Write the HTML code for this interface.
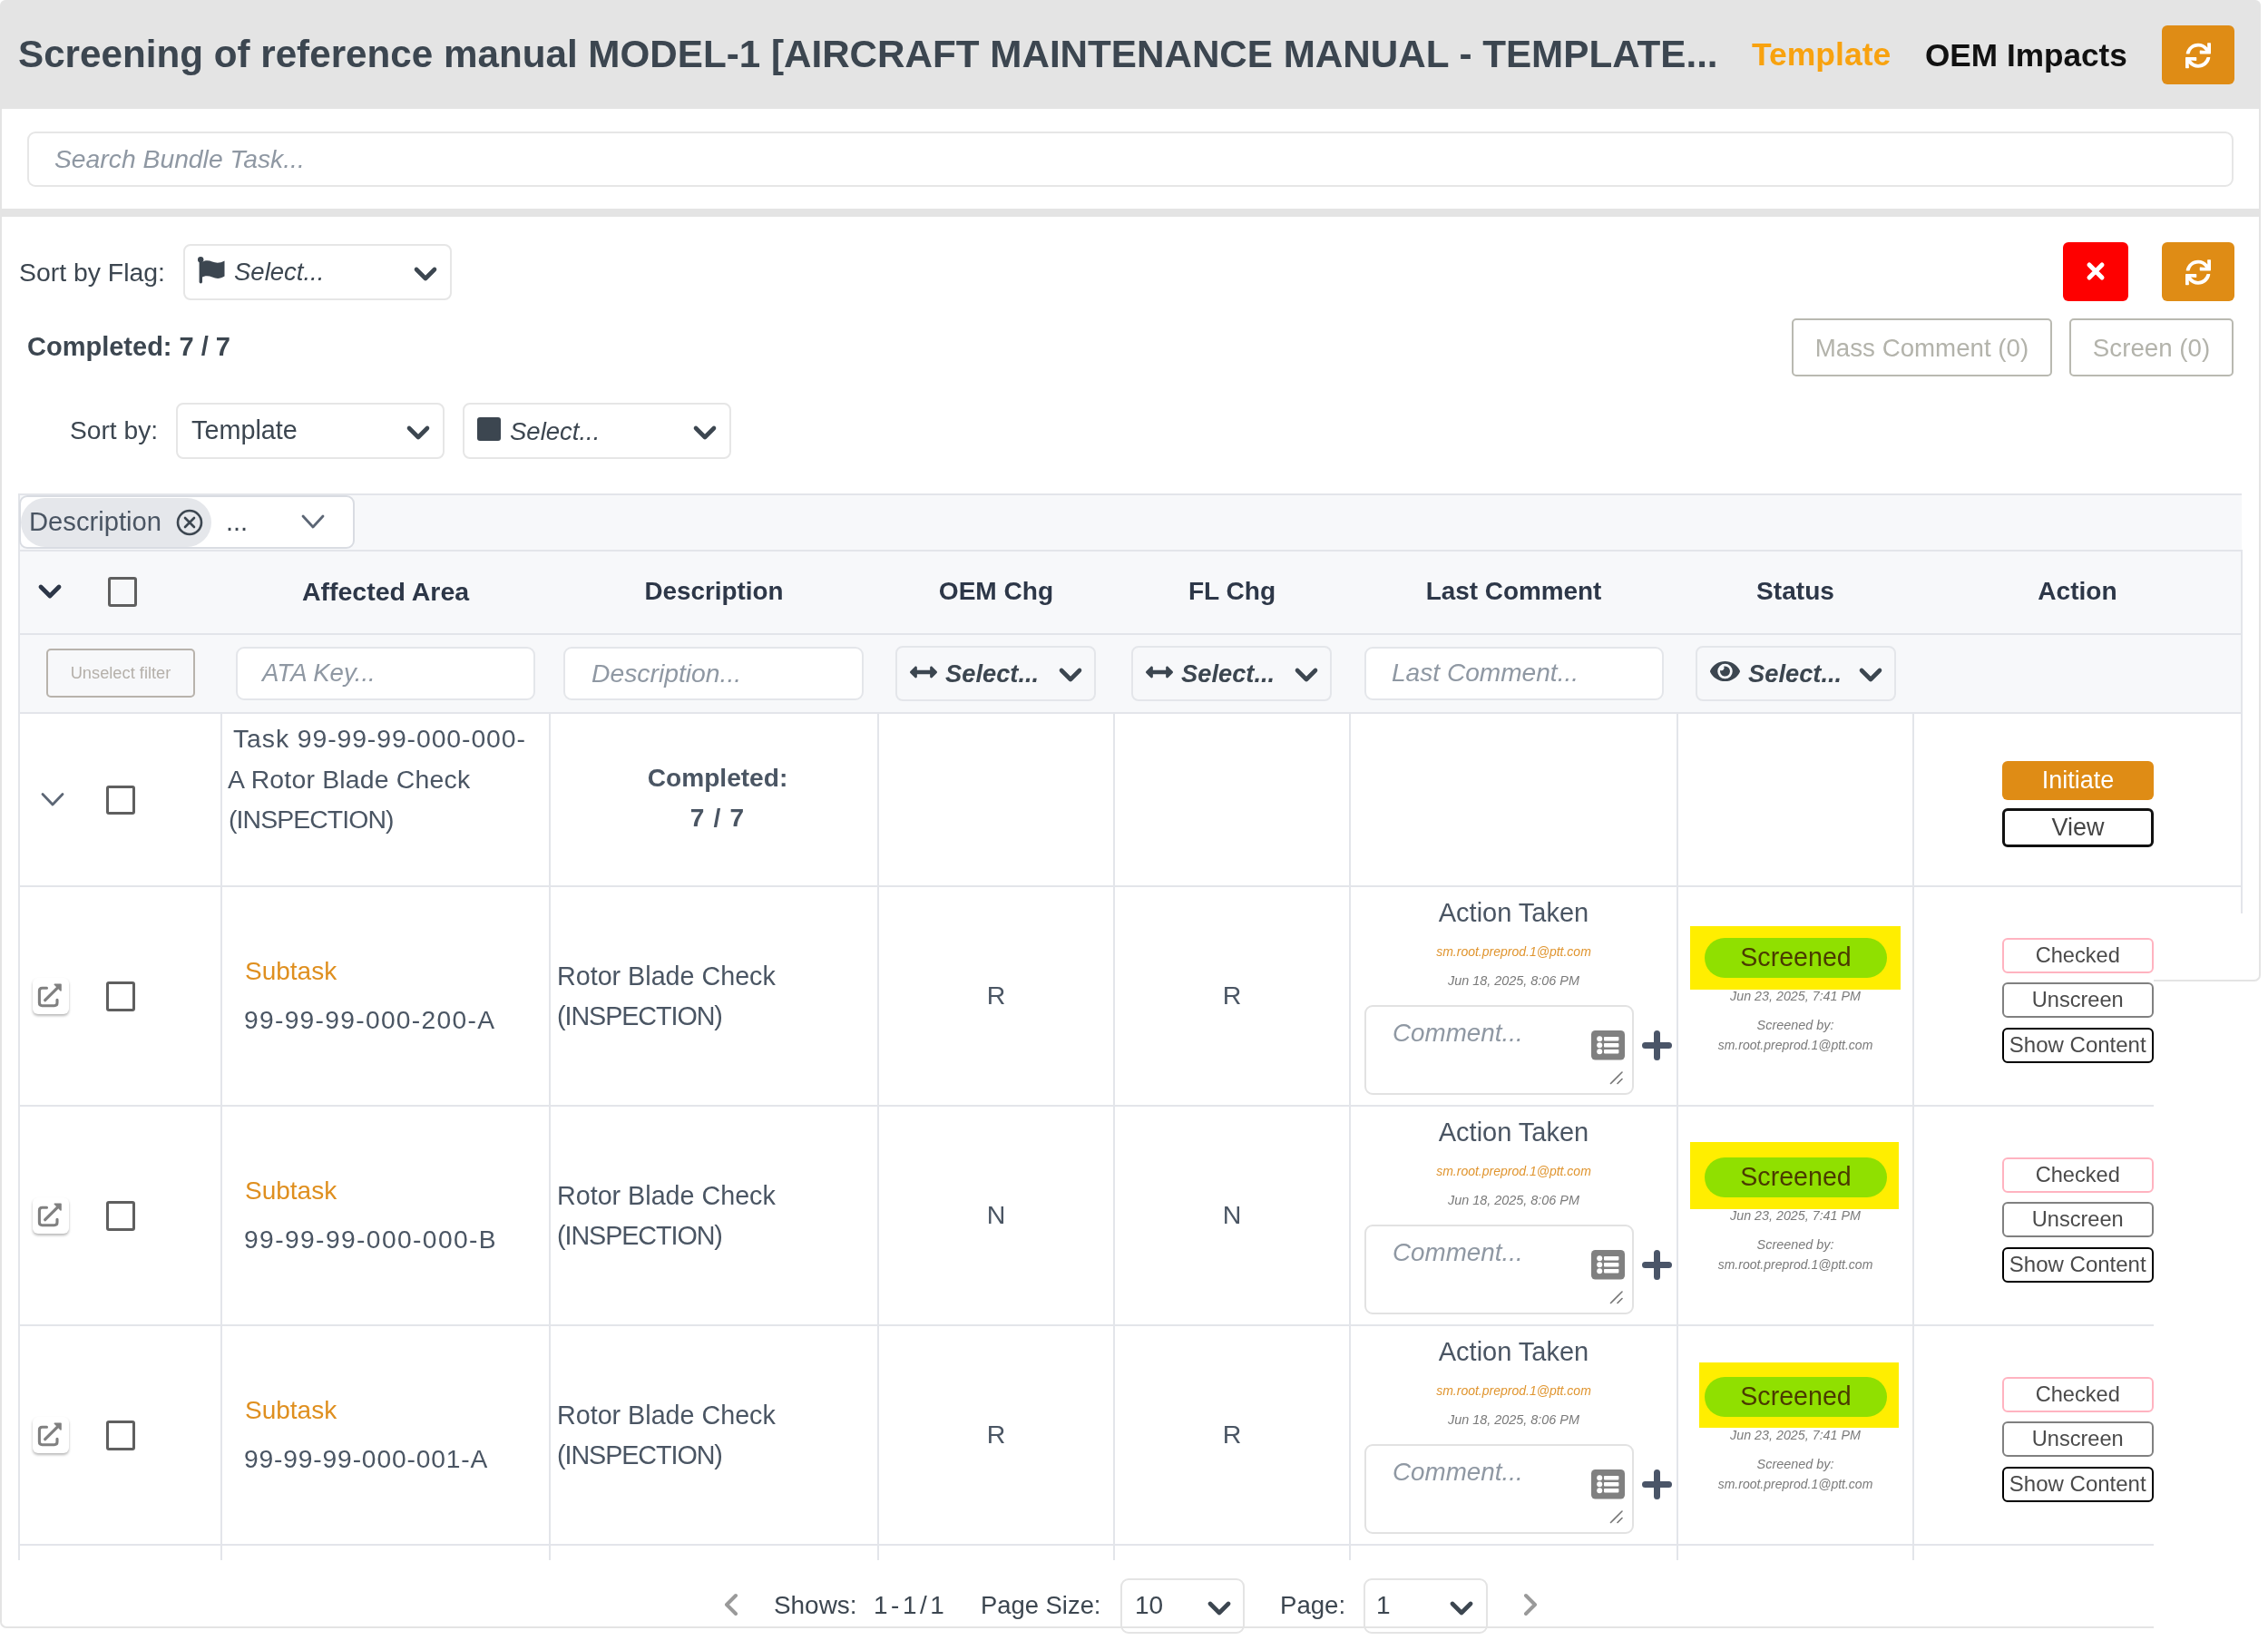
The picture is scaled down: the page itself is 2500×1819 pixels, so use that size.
<!DOCTYPE html>
<html>
<head>
<meta charset="utf-8">
<style>
html,body{margin:0;padding:0;}
body{width:2500px;height:1819px;position:relative;overflow:hidden;background:#fff;font-family:"Liberation Sans",sans-serif;}
.a{position:absolute;}
.t{position:absolute;white-space:nowrap;line-height:1;font-family:"Liberation Sans",sans-serif;will-change:transform;}
.c{text-align:center;}
.b{font-weight:bold;}
.i{font-style:italic;}
.box{position:absolute;box-sizing:border-box;}
.hl{position:absolute;height:2px;background:#e3e5ea;}
.vl{position:absolute;width:2px;background:#e3e5ea;}
svg{position:absolute;overflow:visible;}
</style>
</head>
<body>
<!-- outer gray frame -->
<div class="a" style="left:0;top:0;width:2492px;height:120px;background:#e4e4e4;border-radius:6px 6px 0 0;"></div>
<div class="a" style="left:0;top:118px;width:2px;height:1670px;background:#e4e4e4;"></div>
<div class="a" style="left:0;top:1780px;width:14px;height:15px;border-left:2px solid #e4e4e4;border-bottom:2px solid #e4e4e4;border-radius:0 0 0 7px;box-sizing:border-box;"></div>
<div class="a" style="left:12px;top:1793px;width:2362px;height:2px;background:#e4e4e4;"></div>
<div class="a" style="left:2490px;top:118px;width:2px;height:950px;background:#e4e4e4;"></div>
<div class="a" style="left:2478px;top:1066px;width:14px;height:16px;border-right:2px solid #e4e4e4;border-bottom:2px solid #e4e4e4;border-radius:0 0 7px 0;box-sizing:border-box;"></div>
<div class="a" style="left:2374px;top:1080px;width:106px;height:2px;background:#e4e4e4;"></div>
<div class="a" style="left:0;top:230px;width:2492px;height:9px;background:#e4e4e4;"></div>

<!-- HEADER -->
<div class="t b" style="left:19.5px;top:39px;font-size:42.2px;color:#3c4650;">Screening of reference manual MODEL-1 [AIRCRAFT MAINTENANCE MANUAL - TEMPLATE...</div>
<div class="t b" style="left:1931px;top:43px;font-size:35.5px;color:#f8a20f;">Template</div>
<div class="t b" style="left:2122px;top:43px;font-size:35.2px;color:#111;">OEM Impacts</div>
<div class="box" style="left:2383px;top:28px;width:80px;height:65px;background:#df8c15;border-radius:6px;"></div>
<svg style="left:2409px;top:46.5px;" width="28" height="28.5" viewBox="0 0 512 512"><path d="M440.65 12.57l4 82.77A247.16 247.16 0 0 0 255.83 8C134.73 8 33.91 94.92 12.29 209.82A12 12 0 0 0 24.09 224h49.05a12 12 0 0 0 11.67-9.26 175.91 175.91 0 0 1 317-56.94l-101.46-4.86a12 12 0 0 0-12.57 12v47.41a12 12 0 0 0 12 12H500a12 12 0 0 0 12-12V12a12 12 0 0 0-12-12h-47.37a12 12 0 0 0-11.98 12.57zM255.83 432a175.61 175.61 0 0 1-146-77.8l101.8 4.870a12 12 0 0 0 12.57-12v-47.4a12 12 0 0 0-12-12H12a12 12 0 0 0-12 12V500a12 12 0 0 0 12 12h47.35a12 12 0 0 0 12-12.6l-4.150-82.57A247.17 247.17 0 0 0 255.83 504c121.11 0 221.93-86.92 243.55-201.82a12 12 0 0 0-11.8-14.18h-49.05a12 12 0 0 0-11.67 9.26A175.86 175.86 0 0 1 255.83 432z" fill="#fff"/></svg>

<!-- SEARCH -->
<div class="box" style="left:30px;top:145px;width:2432px;height:61px;border:2px solid #e6e6e6;border-radius:9px;"></div>
<div class="t i" style="left:60px;top:161px;font-size:28.3px;color:#8f98a3;">Search Bundle Task...</div>

<!-- SECTION 2 -->
<div class="t" style="left:21px;top:286px;font-size:28.4px;color:#3c4650;">Sort by Flag:</div>
<div class="box" style="left:202px;top:269px;width:296px;height:62px;border:2px solid #e6e6e6;border-radius:8px;"></div>
<svg style="left:218px;top:283px;" width="30" height="30" viewBox="0 0 30 30"><circle cx="3.2" cy="3.2" r="3.2" fill="#3c4650"/><rect x="1.6" y="3" width="3.4" height="26.5" rx="1.7" fill="#3c4650"/><path d="M4 6.5 C8 3.5 12 4 16 5.5 C20 7 24 7.5 29.5 4.5 L29.5 21.5 C25 24.5 20.5 24.5 16 22.5 C12 21 8 20.5 4 23 Z" fill="#3c4650"/></svg>
<div class="t i" style="left:258px;top:286px;font-size:27.5px;color:#3c4650;">Select...</div>
<svg style="left:456px;top:294px;" width="26" height="16" viewBox="0 0 26 16"><path d="M3 3 L13 13 L23 3" fill="none" stroke="#3c4650" stroke-width="4.6" stroke-linecap="round" stroke-linejoin="round"/></svg>

<div class="t b" style="left:30px;top:368px;font-size:29px;color:#3c4650;">Completed: 7 / 7</div>

<div class="t" style="left:77px;top:460px;font-size:28.2px;color:#3c4650;">Sort by:</div>
<div class="box" style="left:194px;top:444px;width:296px;height:62px;border:2px solid #e6e6e6;border-radius:8px;"></div>
<div class="t" style="left:211px;top:460px;font-size:28.8px;color:#3c4650;">Template</div>
<svg style="left:448px;top:469px;" width="26" height="16" viewBox="0 0 26 16"><path d="M3 3 L13 13 L23 3" fill="none" stroke="#3c4650" stroke-width="4.6" stroke-linecap="round" stroke-linejoin="round"/></svg>
<div class="box" style="left:510px;top:444px;width:296px;height:62px;border:2px solid #e6e6e6;border-radius:8px;"></div>
<div class="a" style="left:526px;top:460px;width:26px;height:26px;background:#3c4650;border-radius:3px;"></div>
<div class="t i" style="left:562px;top:461.5px;font-size:27.5px;color:#3c4650;">Select...</div>
<svg style="left:764px;top:469px;" width="26" height="16" viewBox="0 0 26 16"><path d="M3 3 L13 13 L23 3" fill="none" stroke="#3c4650" stroke-width="4.6" stroke-linecap="round" stroke-linejoin="round"/></svg>

<div class="box" style="left:2274px;top:267px;width:72px;height:65px;background:#fe0000;border-radius:6px;"></div>
<svg style="left:2300px;top:289px;" width="20" height="20" viewBox="0 0 20 20"><path d="M3 3 L17 17 M17 3 L3 17" stroke="#fff" stroke-width="5" stroke-linecap="round"/></svg>
<div class="box" style="left:2383px;top:267px;width:80px;height:65px;background:#df8c15;border-radius:6px;"></div>
<svg style="left:2409px;top:286px;" width="28" height="28.5" viewBox="0 0 512 512"><path d="M440.65 12.57l4 82.77A247.16 247.16 0 0 0 255.83 8C134.73 8 33.91 94.92 12.29 209.82A12 12 0 0 0 24.09 224h49.05a12 12 0 0 0 11.67-9.26 175.91 175.91 0 0 1 317-56.94l-101.46-4.86a12 12 0 0 0-12.57 12v47.41a12 12 0 0 0 12 12H500a12 12 0 0 0 12-12V12a12 12 0 0 0-12-12h-47.37a12 12 0 0 0-11.98 12.57zM255.83 432a175.61 175.61 0 0 1-146-77.8l101.8 4.870a12 12 0 0 0 12.57-12v-47.4a12 12 0 0 0-12-12H12a12 12 0 0 0-12 12V500a12 12 0 0 0 12 12h47.35a12 12 0 0 0 12-12.6l-4.150-82.57A247.17 247.17 0 0 0 255.83 504c121.11 0 221.93-86.92 243.55-201.82a12 12 0 0 0-11.8-14.18h-49.05a12 12 0 0 0-11.67 9.26A175.86 175.86 0 0 1 255.83 432z" fill="#fff"/></svg>

<div class="box" style="left:1975px;top:351px;width:287px;height:64px;border:2px solid #b9b9b1;border-radius:5px;"></div>
<div class="t c" style="left:1975px;width:287px;top:369.5px;font-size:27.7px;color:#b3b3ab;">Mass Comment (0)</div>
<div class="box" style="left:2281px;top:351px;width:181px;height:64px;border:2px solid #b9b9b1;border-radius:5px;"></div>
<div class="t c" style="left:2281px;width:181px;top:369.5px;font-size:27.7px;color:#b3b3ab;">Screen (0)</div>

<!-- TABLE HEAD AREA -->
<div class="a" style="left:21px;top:544px;width:2450px;height:242px;background:#f7f8fa;"></div>
<div class="hl" style="left:21px;top:543.5px;width:2450px;"></div>
<div class="hl" style="left:21px;top:605.5px;width:2450px;"></div>
<div class="hl" style="left:21px;top:697.5px;width:2450px;"></div>
<div class="hl" style="left:21px;top:784.5px;width:2450px;"></div>
<div class="vl" style="left:20px;top:544px;height:1176px;"></div>
<div class="vl" style="left:2470px;top:606px;height:401px;"></div>

<!-- chip multiselect -->
<div class="box" style="left:21px;top:546px;width:370px;height:59px;background:#fff;border:2px solid #d9dce2;border-radius:9px;"></div>
<div class="a" style="left:23px;top:548.5px;width:210px;height:54.5px;background:#e5e7eb;border-radius:28px;"></div>
<div class="t" style="left:32px;top:560.5px;font-size:29.2px;color:#4a5563;">Description</div>
<svg style="left:194px;top:560.5px;" width="30" height="30" viewBox="0 0 30 30"><circle cx="15" cy="15" r="13" fill="none" stroke="#3c4650" stroke-width="2.6"/><path d="M10 10 L20 20 M20 10 L10 20" stroke="#3c4650" stroke-width="2.6" stroke-linecap="round"/></svg>
<div class="t" style="left:249px;top:560.5px;font-size:29px;color:#3c4650;">...</div>
<svg style="left:332px;top:567px;" width="26" height="16" viewBox="0 0 26 16"><path d="M2 2 L13 14 L24 2" fill="none" stroke="#5c6675" stroke-width="2.8" stroke-linecap="round" stroke-linejoin="round"/></svg>

<!-- header row -->
<svg style="left:42px;top:644px;" width="26" height="16" viewBox="0 0 26 16"><path d="M3 3 L13 13 L23 3" fill="none" stroke="#2d3748" stroke-width="4.8" stroke-linecap="round" stroke-linejoin="round"/></svg>
<div class="box" style="left:118.5px;top:636px;width:32.5px;height:32.5px;border:3px solid #5f5f5f;border-radius:3px;"></div>
<div class="t b c" style="left:244px;width:362px;top:637.5px;font-size:28.5px;color:#2d3748;">Affected Area</div>
<div class="t b c" style="left:606px;width:362px;top:637.5px;font-size:27.8px;color:#2d3748;">Description</div>
<div class="t b c" style="left:968px;width:260px;top:637.5px;font-size:28.1px;color:#2d3748;">OEM Chg</div>
<div class="t b c" style="left:1228px;width:260px;top:637.5px;font-size:28.1px;color:#2d3748;">FL Chg</div>
<div class="t b c" style="left:1488px;width:361px;top:637.5px;font-size:27.9px;color:#2d3748;">Last Comment</div>
<div class="t b c" style="left:1849px;width:260px;top:637.5px;font-size:28.1px;color:#2d3748;">Status</div>
<div class="t b c" style="left:2109px;width:362px;top:637.5px;font-size:28.1px;color:#2d3748;">Action</div>

<!-- filter row -->
<div class="box" style="left:50.5px;top:715px;width:164px;height:54px;border:2px solid #b8b3ac;border-radius:5px;"></div>
<div class="t c" style="left:50.5px;width:164px;top:732.8px;font-size:18.3px;color:#b5b0aa;">Unselect filter</div>
<div class="box" style="left:260px;top:712.5px;width:330px;height:59.5px;background:#fff;border:2px solid #e4e6ea;border-radius:9px;"></div>
<div class="t i" style="left:289px;top:728.3px;font-size:27.6px;color:#8f98a3;">ATA Key...</div>
<div class="box" style="left:621px;top:712.5px;width:331px;height:59.5px;background:#fff;border:2px solid #e4e6ea;border-radius:9px;"></div>
<div class="t i" style="left:651.7px;top:728.3px;font-size:28.3px;color:#8f98a3;">Description...</div>
<div class="box" style="left:987px;top:711.5px;width:221px;height:61.5px;border:2px solid #e4e6ea;border-radius:8px;"></div>
<svg style="left:1003px;top:731px;" width="30" height="20" viewBox="0 0 512 320"><path d="M377.941 9.941V56H134.059V9.941c0-21.382-25.851-32.09-40.971-16.971L7.029 79.029c-9.373 9.373-9.373 24.568 0 33.941l86.059 86.059c15.119 15.119 40.971 4.411 40.971-16.971V136h243.882v46.059c0 21.382 25.851 32.09 40.971 16.971l86.059-86.059c9.373-9.373 9.373-24.568 0-33.941L418.912-7.029C403.793-22.149 377.941-11.441 377.941 9.941z" transform="translate(0,64)" fill="#3c4650"/></svg>
<div class="t b i" style="left:1042px;top:728.5px;font-size:27.3px;color:#3c4650;">Select...</div>
<svg style="left:1166.5px;top:735.5px;" width="26" height="16" viewBox="0 0 26 16"><path d="M3 3 L13 13 L23 3" fill="none" stroke="#3c4650" stroke-width="4.6" stroke-linecap="round" stroke-linejoin="round"/></svg>
<div class="box" style="left:1247px;top:711.5px;width:221px;height:61.5px;border:2px solid #e4e6ea;border-radius:8px;"></div>
<svg style="left:1263px;top:731px;" width="30" height="20" viewBox="0 0 512 320"><path d="M377.941 9.941V56H134.059V9.941c0-21.382-25.851-32.09-40.971-16.971L7.029 79.029c-9.373 9.373-9.373 24.568 0 33.941l86.059 86.059c15.119 15.119 40.971 4.411 40.971-16.971V136h243.882v46.059c0 21.382 25.851 32.09 40.971 16.971l86.059-86.059c9.373-9.373 9.373-24.568 0-33.941L418.912-7.029C403.793-22.149 377.941-11.441 377.941 9.941z" transform="translate(0,64)" fill="#3c4650"/></svg>
<div class="t b i" style="left:1302px;top:728.5px;font-size:27.3px;color:#3c4650;">Select...</div>
<svg style="left:1426.5px;top:735.5px;" width="26" height="16" viewBox="0 0 26 16"><path d="M3 3 L13 13 L23 3" fill="none" stroke="#3c4650" stroke-width="4.6" stroke-linecap="round" stroke-linejoin="round"/></svg>
<div class="box" style="left:1503.5px;top:713px;width:330px;height:59px;background:#fff;border:2px solid #e4e6ea;border-radius:9px;"></div>
<div class="t i" style="left:1533.6px;top:728.3px;font-size:28.1px;color:#8f98a3;">Last Comment...</div>
<div class="box" style="left:1868.5px;top:711.5px;width:221.5px;height:61.5px;border:2px solid #e4e6ea;border-radius:8px;"></div>
<svg style="left:1885px;top:729px;" width="33" height="24" viewBox="0 0 576 416"><path d="M572.52 177.4C518.29 71.59 410.93 0 288 0S57.68 71.64 3.48 177.41a32.35 32.35 0 0 0 0 29.19C57.71 312.41 165.07 384 288 384s230.32-71.64 284.52-177.41a32.35 32.35 0 0 0 0-29.19zM288 336a144 144 0 1 1 144-144 143.93 143.93 0 0 1-144 144zm0-240a95.31 95.31 0 0 0-25.310 3.790 47.85 47.85 0 0 1-66.900 66.900A95.780 95.780 0 1 0 288 96z" fill="#3c4650"/></svg>
<div class="t b i" style="left:1927px;top:728.5px;font-size:27.3px;color:#3c4650;">Select...</div>
<svg style="left:2048.5px;top:735.5px;" width="26" height="16" viewBox="0 0 26 16"><path d="M3 3 L13 13 L23 3" fill="none" stroke="#3c4650" stroke-width="4.6" stroke-linecap="round" stroke-linejoin="round"/></svg>

<!-- body grid lines -->
<div class="hl" style="left:21px;top:976px;width:2450px;"></div>
<div class="hl" style="left:21px;top:1218px;width:2353px;"></div>
<div class="hl" style="left:21px;top:1460px;width:2353px;"></div>
<div class="hl" style="left:21px;top:1702px;width:2353px;"></div>
<div class="vl" style="left:243px;top:786px;height:934px;"></div>
<div class="vl" style="left:605px;top:786px;height:934px;"></div>
<div class="vl" style="left:967px;top:786px;height:934px;"></div>
<div class="vl" style="left:1227px;top:786px;height:934px;"></div>
<div class="vl" style="left:1487px;top:786px;height:934px;"></div>
<div class="vl" style="left:1848px;top:786px;height:934px;"></div>
<div class="vl" style="left:2108px;top:786px;height:934px;"></div>

<!-- task row -->
<svg style="left:45px;top:873px;" width="26" height="17" viewBox="0 0 26 17"><path d="M2 2.5 L13 14 L24 2.5" fill="none" stroke="#5c6675" stroke-width="2.8" stroke-linecap="round" stroke-linejoin="round"/></svg>
<div class="box" style="left:116.5px;top:865.5px;width:32.5px;height:32.5px;border:3px solid #5f5f5f;border-radius:3px;"></div>
<div class="t" style="left:257px;top:799.5px;font-size:28.4px;letter-spacing:0.9px;color:#4a5563;">Task 99-99-99-000-000-</div>
<div class="t" style="left:251px;top:844.5px;font-size:28.4px;letter-spacing:0.2px;color:#4a5563;">A Rotor Blade Check</div>
<div class="t" style="left:251.5px;top:889px;font-size:28.4px;letter-spacing:-0.9px;color:#4a5563;">(INSPECTION)</div>
<div class="t b c" style="left:610px;width:362px;top:844px;font-size:28.1px;color:#4a5563;">Completed:</div>
<div class="t b c" style="left:610px;width:362px;top:888px;font-size:28.1px;letter-spacing:1.2px;color:#4a5563;">7 / 7</div>
<div class="box" style="left:2207px;top:839px;width:167px;height:43px;background:#df8c15;border-radius:6px;"></div>
<div class="t c" style="left:2207px;width:167px;top:846.8px;font-size:27px;color:#fff;">Initiate</div>
<div class="box" style="left:2207px;top:891px;width:167px;height:42.5px;border:3px solid #111;border-radius:6px;"></div>
<div class="t c" style="left:2207px;width:167px;top:898.8px;font-size:27px;color:#444;">View</div>

<!--ROWS-->
<!-- subtask row 977 -->
<div class="box" style="left:35.5px;top:1078px;width:40.5px;height:40px;background:#fff;border-radius:6px;box-shadow:0 2px 3px rgba(0,0,0,0.28);"></div>
<svg style="left:42px;top:1084px;" width="27" height="27" viewBox="0 0 27 27"><path d="M9.5 5.3 H4.5 Q1.4 5.3 1.4 8.4 V21.6 Q1.4 24.7 4.5 24.7 H17.9 Q21 24.7 21 21.6 V18.2" fill="none" stroke="#808080" stroke-width="3.1" stroke-linecap="round"/><path d="M7.7 18.7 L20.8 5.6" stroke="#808080" stroke-width="3.3" stroke-linecap="round"/><path d="M18.3 1.3 H25 V8 Z" fill="#808080" stroke="#808080" stroke-width="1.6" stroke-linejoin="round"/></svg>
<div class="box" style="left:116.5px;top:1082px;width:32.5px;height:33px;border:3px solid #5f5f5f;border-radius:3px;"></div>
<div class="t" style="left:269.6px;top:1057.29px;font-size:28px;color:#df8f1f;">Subtask</div>
<div class="t" style="left:269.4px;top:1110.12px;font-size:28.2px;letter-spacing:1.3px;color:#4a5563;">99-99-99-000-200-A</div>
<div class="t" style="left:614px;top:1061.7px;font-size:28.7px;color:#4a5563;">Rotor Blade Check</div>
<div class="t" style="left:614px;top:1106.3px;font-size:28.7px;letter-spacing:-1.05px;color:#4a5563;">(INSPECTION)</div>
<div class="t c" style="left:968px;width:260px;top:1083.47px;font-size:28.5px;color:#4a5563;">R</div>
<div class="t c" style="left:1228px;width:260px;top:1083.47px;font-size:28.5px;color:#4a5563;">R</div>
<div class="t c" style="left:1488px;width:361px;top:992.15px;font-size:29px;color:#4a5563;">Action Taken</div>
<div class="t c i" style="left:1488px;width:361px;top:1042.35px;font-size:14px;color:#e0952f;">sm.root.preprod.1@ptt.com</div>
<div class="t c i" style="left:1488px;width:361px;top:1073.81px;font-size:14.4px;color:#7a7a7a;">Jun 18, 2025, 8:06 PM</div>
<div class="box" style="left:1504px;top:1107.7px;width:297px;height:99px;background:#fff;border:2px solid #e2e2e2;border-radius:9px;"></div>
<div class="t i" style="left:1535px;top:1125.26px;font-size:27.8px;color:#8f98a3;">Comment...</div>
<svg style="left:1754px;top:1136.4px;" width="37" height="33" viewBox="0 0 37 33"><rect x="0" y="0" width="37" height="32.5" rx="4.5" fill="#808080"/><circle cx="9.2" cy="9.2" r="3" fill="#fff"/><circle cx="9.2" cy="16.3" r="3" fill="#fff"/><circle cx="9.2" cy="23.2" r="3" fill="#fff"/><rect x="14" y="7" width="16.4" height="4.4" rx="0.8" fill="#fff"/><rect x="14" y="14.1" width="16.4" height="4.4" rx="0.8" fill="#fff"/><rect x="14" y="21" width="16.4" height="4.4" rx="0.8" fill="#fff"/></svg>
<svg style="left:1774px;top:1180px;" width="16" height="16" viewBox="0 0 16 16"><path d="M1.5 14.5 L14 2 M9 14.5 L14 9.5" stroke="#777" stroke-width="1.6" stroke-linecap="round"/></svg>
<svg style="left:1809.5px;top:1135.7px;" width="33" height="33" viewBox="0 0 33 33"><path d="M16.5 3.5 V29.5 M3.5 16.5 H29.5" stroke="#4a5568" stroke-width="7" stroke-linecap="round"/></svg>
<div class="a" style="left:1863.3px;top:1020.8px;width:232.2px;height:70.6px;background:#ffee00;"></div>
<div class="a" style="left:1879px;top:1034px;width:201px;height:44.3px;background:#90e000;border-radius:23px;"></div>
<div class="t c" style="left:1879px;width:201px;top:1040.98px;font-size:28.6px;color:#4a3b00;">Screened</div>
<div class="t c i" style="left:1849px;width:260px;top:1091.49px;font-size:14.3px;color:#7a7a7a;">Jun 23, 2025, 7:41 PM</div>
<div class="t c i" style="left:1849px;width:260px;top:1122.61px;font-size:14.4px;color:#7a7a7a;">Screened by:</div>
<div class="t c i" style="left:1849px;width:260px;top:1144.65px;font-size:14px;color:#7a7a7a;">sm.root.preprod.1@ptt.com</div>
<div class="box" style="left:2207px;top:1034.2px;width:166.5px;height:39px;border:2px solid #ffb3c0;border-radius:6px;"></div>
<div class="t c" style="left:2207px;width:166.5px;top:1041.92px;font-size:23.6px;color:#4a4a4a;">Checked</div>
<div class="box" style="left:2207px;top:1083.4px;width:166.5px;height:39px;border:2.5px solid #808080;border-radius:6px;"></div>
<div class="t c" style="left:2207px;width:166.5px;top:1091.12px;font-size:23.6px;color:#4a4a4a;">Unscreen</div>
<div class="box" style="left:2207px;top:1132.8px;width:166.5px;height:38.8px;border:2.6px solid #000;border-radius:6px;"></div>
<div class="t c" style="left:2207px;width:166.5px;top:1139.98px;font-size:24px;color:#4a4a4a;">Show Content</div>
<!-- subtask row 1219 -->
<div class="box" style="left:35.5px;top:1320px;width:40.5px;height:40px;background:#fff;border-radius:6px;box-shadow:0 2px 3px rgba(0,0,0,0.28);"></div>
<svg style="left:42px;top:1326px;" width="27" height="27" viewBox="0 0 27 27"><path d="M9.5 5.3 H4.5 Q1.4 5.3 1.4 8.4 V21.6 Q1.4 24.7 4.5 24.7 H17.9 Q21 24.7 21 21.6 V18.2" fill="none" stroke="#808080" stroke-width="3.1" stroke-linecap="round"/><path d="M7.7 18.7 L20.8 5.6" stroke="#808080" stroke-width="3.3" stroke-linecap="round"/><path d="M18.3 1.3 H25 V8 Z" fill="#808080" stroke="#808080" stroke-width="1.6" stroke-linejoin="round"/></svg>
<div class="box" style="left:116.5px;top:1324px;width:32.5px;height:33px;border:3px solid #5f5f5f;border-radius:3px;"></div>
<div class="t" style="left:269.6px;top:1299.29px;font-size:28px;color:#df8f1f;">Subtask</div>
<div class="t" style="left:269.4px;top:1352.12px;font-size:28.2px;letter-spacing:1.4px;color:#4a5563;">99-99-99-000-000-B</div>
<div class="t" style="left:614px;top:1303.7px;font-size:28.7px;color:#4a5563;">Rotor Blade Check</div>
<div class="t" style="left:614px;top:1348.3px;font-size:28.7px;letter-spacing:-1.05px;color:#4a5563;">(INSPECTION)</div>
<div class="t c" style="left:968px;width:260px;top:1325.47px;font-size:28.5px;color:#4a5563;">N</div>
<div class="t c" style="left:1228px;width:260px;top:1325.47px;font-size:28.5px;color:#4a5563;">N</div>
<div class="t c" style="left:1488px;width:361px;top:1234.15px;font-size:29px;color:#4a5563;">Action Taken</div>
<div class="t c i" style="left:1488px;width:361px;top:1284.35px;font-size:14px;color:#e0952f;">sm.root.preprod.1@ptt.com</div>
<div class="t c i" style="left:1488px;width:361px;top:1315.81px;font-size:14.4px;color:#7a7a7a;">Jun 18, 2025, 8:06 PM</div>
<div class="box" style="left:1504px;top:1349.7px;width:297px;height:99px;background:#fff;border:2px solid #e2e2e2;border-radius:9px;"></div>
<div class="t i" style="left:1535px;top:1367.26px;font-size:27.8px;color:#8f98a3;">Comment...</div>
<svg style="left:1754px;top:1378.4px;" width="37" height="33" viewBox="0 0 37 33"><rect x="0" y="0" width="37" height="32.5" rx="4.5" fill="#808080"/><circle cx="9.2" cy="9.2" r="3" fill="#fff"/><circle cx="9.2" cy="16.3" r="3" fill="#fff"/><circle cx="9.2" cy="23.2" r="3" fill="#fff"/><rect x="14" y="7" width="16.4" height="4.4" rx="0.8" fill="#fff"/><rect x="14" y="14.1" width="16.4" height="4.4" rx="0.8" fill="#fff"/><rect x="14" y="21" width="16.4" height="4.4" rx="0.8" fill="#fff"/></svg>
<svg style="left:1774px;top:1422px;" width="16" height="16" viewBox="0 0 16 16"><path d="M1.5 14.5 L14 2 M9 14.5 L14 9.5" stroke="#777" stroke-width="1.6" stroke-linecap="round"/></svg>
<svg style="left:1809.5px;top:1377.7px;" width="33" height="33" viewBox="0 0 33 33"><path d="M16.5 3.5 V29.5 M3.5 16.5 H29.5" stroke="#4a5568" stroke-width="7" stroke-linecap="round"/></svg>
<div class="a" style="left:1863.3px;top:1258.5px;width:230.2px;height:74.1px;background:#ffee00;"></div>
<div class="a" style="left:1879px;top:1276px;width:201px;height:44.3px;background:#90e000;border-radius:23px;"></div>
<div class="t c" style="left:1879px;width:201px;top:1282.98px;font-size:28.6px;color:#4a3b00;">Screened</div>
<div class="t c i" style="left:1849px;width:260px;top:1333.49px;font-size:14.3px;color:#7a7a7a;">Jun 23, 2025, 7:41 PM</div>
<div class="t c i" style="left:1849px;width:260px;top:1364.61px;font-size:14.4px;color:#7a7a7a;">Screened by:</div>
<div class="t c i" style="left:1849px;width:260px;top:1386.65px;font-size:14px;color:#7a7a7a;">sm.root.preprod.1@ptt.com</div>
<div class="box" style="left:2207px;top:1276.2px;width:166.5px;height:39px;border:2px solid #ffb3c0;border-radius:6px;"></div>
<div class="t c" style="left:2207px;width:166.5px;top:1283.92px;font-size:23.6px;color:#4a4a4a;">Checked</div>
<div class="box" style="left:2207px;top:1325.4px;width:166.5px;height:39px;border:2.5px solid #808080;border-radius:6px;"></div>
<div class="t c" style="left:2207px;width:166.5px;top:1333.12px;font-size:23.6px;color:#4a4a4a;">Unscreen</div>
<div class="box" style="left:2207px;top:1374.8px;width:166.5px;height:38.8px;border:2.6px solid #000;border-radius:6px;"></div>
<div class="t c" style="left:2207px;width:166.5px;top:1381.98px;font-size:24px;color:#4a4a4a;">Show Content</div>
<!-- subtask row 1461 -->
<div class="box" style="left:35.5px;top:1562px;width:40.5px;height:40px;background:#fff;border-radius:6px;box-shadow:0 2px 3px rgba(0,0,0,0.28);"></div>
<svg style="left:42px;top:1568px;" width="27" height="27" viewBox="0 0 27 27"><path d="M9.5 5.3 H4.5 Q1.4 5.3 1.4 8.4 V21.6 Q1.4 24.7 4.5 24.7 H17.9 Q21 24.7 21 21.6 V18.2" fill="none" stroke="#808080" stroke-width="3.1" stroke-linecap="round"/><path d="M7.7 18.7 L20.8 5.6" stroke="#808080" stroke-width="3.3" stroke-linecap="round"/><path d="M18.3 1.3 H25 V8 Z" fill="#808080" stroke="#808080" stroke-width="1.6" stroke-linejoin="round"/></svg>
<div class="box" style="left:116.5px;top:1566px;width:32.5px;height:33px;border:3px solid #5f5f5f;border-radius:3px;"></div>
<div class="t" style="left:269.6px;top:1541.29px;font-size:28px;color:#df8f1f;">Subtask</div>
<div class="t" style="left:269.4px;top:1594.12px;font-size:28.2px;letter-spacing:0.85px;color:#4a5563;">99-99-99-000-001-A</div>
<div class="t" style="left:614px;top:1545.7px;font-size:28.7px;color:#4a5563;">Rotor Blade Check</div>
<div class="t" style="left:614px;top:1590.3px;font-size:28.7px;letter-spacing:-1.05px;color:#4a5563;">(INSPECTION)</div>
<div class="t c" style="left:968px;width:260px;top:1567.47px;font-size:28.5px;color:#4a5563;">R</div>
<div class="t c" style="left:1228px;width:260px;top:1567.47px;font-size:28.5px;color:#4a5563;">R</div>
<div class="t c" style="left:1488px;width:361px;top:1476.15px;font-size:29px;color:#4a5563;">Action Taken</div>
<div class="t c i" style="left:1488px;width:361px;top:1526.35px;font-size:14px;color:#e0952f;">sm.root.preprod.1@ptt.com</div>
<div class="t c i" style="left:1488px;width:361px;top:1557.81px;font-size:14.4px;color:#7a7a7a;">Jun 18, 2025, 8:06 PM</div>
<div class="box" style="left:1504px;top:1591.7px;width:297px;height:99px;background:#fff;border:2px solid #e2e2e2;border-radius:9px;"></div>
<div class="t i" style="left:1535px;top:1609.26px;font-size:27.8px;color:#8f98a3;">Comment...</div>
<svg style="left:1754px;top:1620.4px;" width="37" height="33" viewBox="0 0 37 33"><rect x="0" y="0" width="37" height="32.5" rx="4.5" fill="#808080"/><circle cx="9.2" cy="9.2" r="3" fill="#fff"/><circle cx="9.2" cy="16.3" r="3" fill="#fff"/><circle cx="9.2" cy="23.2" r="3" fill="#fff"/><rect x="14" y="7" width="16.4" height="4.4" rx="0.8" fill="#fff"/><rect x="14" y="14.1" width="16.4" height="4.4" rx="0.8" fill="#fff"/><rect x="14" y="21" width="16.4" height="4.4" rx="0.8" fill="#fff"/></svg>
<svg style="left:1774px;top:1664px;" width="16" height="16" viewBox="0 0 16 16"><path d="M1.5 14.5 L14 2 M9 14.5 L14 9.5" stroke="#777" stroke-width="1.6" stroke-linecap="round"/></svg>
<svg style="left:1809.5px;top:1619.7px;" width="33" height="33" viewBox="0 0 33 33"><path d="M16.5 3.5 V29.5 M3.5 16.5 H29.5" stroke="#4a5568" stroke-width="7" stroke-linecap="round"/></svg>
<div class="a" style="left:1872.9px;top:1501.7px;width:220.6px;height:72.1px;background:#ffee00;"></div>
<div class="a" style="left:1879px;top:1518px;width:201px;height:44.3px;background:#90e000;border-radius:23px;"></div>
<div class="t c" style="left:1879px;width:201px;top:1524.98px;font-size:28.6px;color:#4a3b00;">Screened</div>
<div class="t c i" style="left:1849px;width:260px;top:1575.49px;font-size:14.3px;color:#7a7a7a;">Jun 23, 2025, 7:41 PM</div>
<div class="t c i" style="left:1849px;width:260px;top:1606.61px;font-size:14.4px;color:#7a7a7a;">Screened by:</div>
<div class="t c i" style="left:1849px;width:260px;top:1628.65px;font-size:14px;color:#7a7a7a;">sm.root.preprod.1@ptt.com</div>
<div class="box" style="left:2207px;top:1518.2px;width:166.5px;height:39px;border:2px solid #ffb3c0;border-radius:6px;"></div>
<div class="t c" style="left:2207px;width:166.5px;top:1525.92px;font-size:23.6px;color:#4a4a4a;">Checked</div>
<div class="box" style="left:2207px;top:1567.4px;width:166.5px;height:39px;border:2.5px solid #808080;border-radius:6px;"></div>
<div class="t c" style="left:2207px;width:166.5px;top:1575.12px;font-size:23.6px;color:#4a4a4a;">Unscreen</div>
<div class="box" style="left:2207px;top:1616.8px;width:166.5px;height:38.8px;border:2.6px solid #000;border-radius:6px;"></div>
<div class="t c" style="left:2207px;width:166.5px;top:1623.98px;font-size:24px;color:#4a4a4a;">Show Content</div>
<!--/ROWS-->

<!-- PAGINATION -->
<svg style="left:796px;top:1756px;" width="19" height="26" viewBox="0 0 19 26"><path d="M15 3 L5 13 L15 23" fill="none" stroke="#9a9a9a" stroke-width="4" stroke-linecap="round" stroke-linejoin="round"/></svg>
<div class="t" style="left:852.6px;top:1756.4px;font-size:27.9px;color:#3c4650;">Shows:</div>
<div class="t" style="left:963px;top:1756.4px;font-size:27.9px;letter-spacing:-1.6px;word-spacing:-1px;color:#3c4650;">1 - 1 / 1</div>
<div class="t" style="left:1081px;top:1756.4px;font-size:27.4px;color:#3c4650;">Page Size:</div>
<div class="box" style="left:1234.5px;top:1740px;width:137.5px;height:61px;border:2px solid #e4e4e4;border-radius:9px;"></div>
<div class="t" style="left:1251px;top:1756.4px;font-size:28px;color:#3c4650;">10</div>
<svg style="left:1330.5px;top:1764.5px;" width="26" height="16" viewBox="0 0 26 16"><path d="M3 3 L13 13 L23 3" fill="none" stroke="#3c4650" stroke-width="4.6" stroke-linecap="round" stroke-linejoin="round"/></svg>
<div class="t" style="left:1411.4px;top:1756.4px;font-size:27.6px;color:#3c4650;">Page:</div>
<div class="box" style="left:1502.6px;top:1740px;width:137px;height:61px;border:2px solid #e4e4e4;border-radius:9px;"></div>
<div class="t" style="left:1517px;top:1756.4px;font-size:28px;color:#3c4650;">1</div>
<svg style="left:1598px;top:1764.5px;" width="26" height="16" viewBox="0 0 26 16"><path d="M3 3 L13 13 L23 3" fill="none" stroke="#3c4650" stroke-width="4.6" stroke-linecap="round" stroke-linejoin="round"/></svg>
<svg style="left:1678px;top:1756px;" width="19" height="26" viewBox="0 0 19 26"><path d="M4 3 L14 13 L4 23" fill="none" stroke="#9a9a9a" stroke-width="4" stroke-linecap="round" stroke-linejoin="round"/></svg>

</body>
</html>
